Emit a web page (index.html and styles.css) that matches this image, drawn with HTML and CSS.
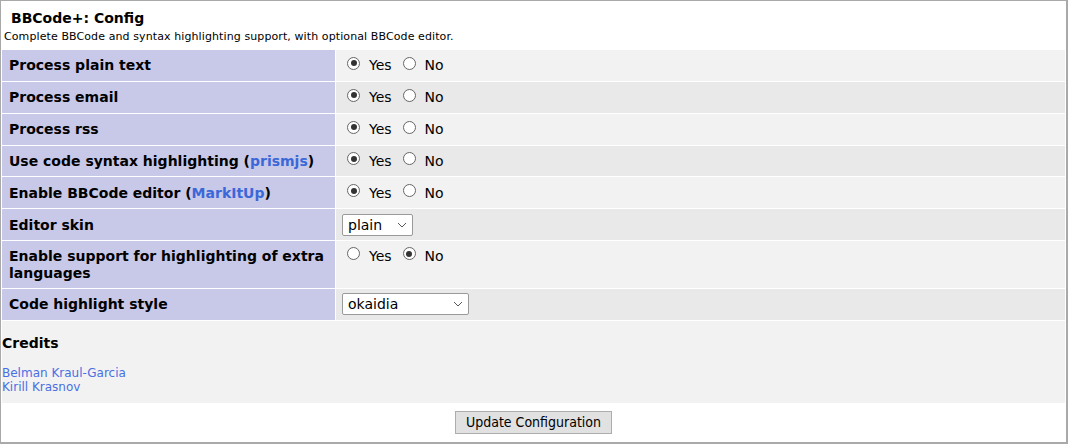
FILE: index.html
```html
<!DOCTYPE html>
<html>
<head>
<meta charset="utf-8">
<link rel="stylesheet" href="styles.css">
</head>
<body>
<div class="panel">
  <div class="head">
    <h1 class="title">BBCode+: Config</h1>
    <p class="desc">Complete BBCode and syntax highlighting support, with optional BBCode editor.</p>
  </div>
  <table class="cfg">
    <tr class="odd">
      <th>Process plain text</th>
      <td><label class="opt"><span class="radio on"></span>Yes</label><label class="opt"><span class="radio"></span>No</label></td>
    </tr>
    <tr class="even">
      <th>Process email</th>
      <td><label class="opt"><span class="radio on"></span>Yes</label><label class="opt"><span class="radio"></span>No</label></td>
    </tr>
    <tr class="odd">
      <th>Process rss</th>
      <td><label class="opt"><span class="radio on"></span>Yes</label><label class="opt"><span class="radio"></span>No</label></td>
    </tr>
    <tr class="even">
      <th>Use code syntax highlighting (<a href="#">prismjs</a>)</th>
      <td><label class="opt"><span class="radio on"></span>Yes</label><label class="opt"><span class="radio"></span>No</label></td>
    </tr>
    <tr class="odd">
      <th>Enable BBCode editor (<a href="#">MarkItUp</a>)</th>
      <td><label class="opt"><span class="radio on"></span>Yes</label><label class="opt"><span class="radio"></span>No</label></td>
    </tr>
    <tr class="even">
      <th>Editor skin</th>
      <td><div class="select small"><span>plain</span><svg width="10" height="6" viewBox="0 0 10 6"><path d="M1 1 L5 5 L9 1" fill="none" stroke="#555" stroke-width="1"/></svg></div></td>
    </tr>
    <tr class="odd tall">
      <th>Enable support for highlighting of extra languages</th>
      <td class="top"><label class="opt"><span class="radio"></span>Yes</label><label class="opt"><span class="radio on"></span>No</label></td>
    </tr>
    <tr class="even">
      <th>Code highlight style</th>
      <td><div class="select wide"><span>okaidia</span><svg width="10" height="6" viewBox="0 0 10 6"><path d="M1 1 L5 5 L9 1" fill="none" stroke="#555" stroke-width="1"/></svg></div></td>
    </tr>
  </table>
  <div class="credits">
    <h2>Credits</h2>
    <a href="#">Belman Kraul-Garcia</a>
    <a href="#">Kirill Krasnov</a>
  </div>
  <div class="actions">
    <button class="btn">Update Configuration</button>
  </div>
</div>
</body>
</html>
```
FILE: styles.css
```css
html, body {
  margin: 0;
  padding: 0;
  background: #fff;
}
body {
  font-family: "DejaVu Sans", Verdana, sans-serif;
  color: #000;
}
.panel {
  width: 1068px;
  height: 444px;
  box-sizing: border-box;
  border: 1px solid #a9a9a9;
  border-right-width: 2px;
  border-bottom-width: 2px;
  display: flex;
  flex-direction: column;
}
.head {
  padding: 9px 0 0 3px;
  height: 39px;
}
.title {
  margin: 0 0 0 7px;
  font-size: 14px;
  font-weight: bold;
  line-height: 17px;
}
.desc {
  margin: 3px 0 0 0;
  font-size: 11px;
  line-height: 13px;
  letter-spacing: 0.1px;
}
.cfg {
  border-collapse: separate;
  border-spacing: 1px;
  width: 100%;
  margin: 0;
}
.cfg th {
  width: 319px;
  background: #c8c8e8;
  text-align: left;
  font-size: 14px;
  font-weight: bold;
  line-height: 17px;
  padding: 7px 7px 6px 7px;
  vertical-align: middle;
  height: 17.85px;
}
.cfg td {
  padding: 0 6px;
  vertical-align: middle;
}
.cfg td.top {
  vertical-align: top;
  padding-top: 5px;
}
.odd td { background: #f2f2f2; }
.even td { background: #e9e9e9; }
.cfg a {
  color: #3a68d8;
  text-decoration: none;
}
.opt {
  display: inline-flex;
  align-items: center;
  font-size: 14px;
  margin-right: 11px;
  position: relative;
  top: 1px;
}
.opt:first-child {
  margin-left: 5px;
}
.radio {
  width: 13px;
  height: 13px;
  border: 1px solid #666;
  border-radius: 50%;
  background: #fff;
  margin-right: 9px;
  box-sizing: border-box;
  display: inline-block;
  position: relative;
  top: -2px;
}
.radio.on::after {
  content: "";
  position: absolute;
  left: 2.5px;
  top: 2.5px;
  width: 6px;
  height: 6px;
  border-radius: 50%;
  background: #333;
}
.select {
  display: flex;
  align-items: center;
  justify-content: space-between;
  height: 22px;
  box-sizing: border-box;
  border: 1px solid #9a9a9a;
  border-radius: 2px;
  background: #fff;
  font-size: 14px;
  padding: 0 5px 0 5px;
}
.select.small { width: 71px; }
.select.wide { width: 127px; }
.credits {
  background: #f2f2f2;
  margin: 0 1px;
  padding: 14px 0 9px 0;
}
.credits h2 {
  margin: 0 0 14px 0;
  font-size: 14px;
  font-weight: bold;
  line-height: 17px;
}
.credits a {
  display: block;
  color: #4a6fe3;
  text-decoration: none;
  font-size: 12px;
  line-height: 14px;
}
.actions {
  display: flex;
  justify-content: center;
  padding-top: 8px;
}
.btn {
  font-family: "DejaVu Sans Condensed", "DejaVu Sans", sans-serif;
  font-size: 14px;
  background: #e1e1e1;
  border: 1px solid #adadad;
  padding: 1px 10px 2px;
  height: 23px;
  color: #000;
}
```
